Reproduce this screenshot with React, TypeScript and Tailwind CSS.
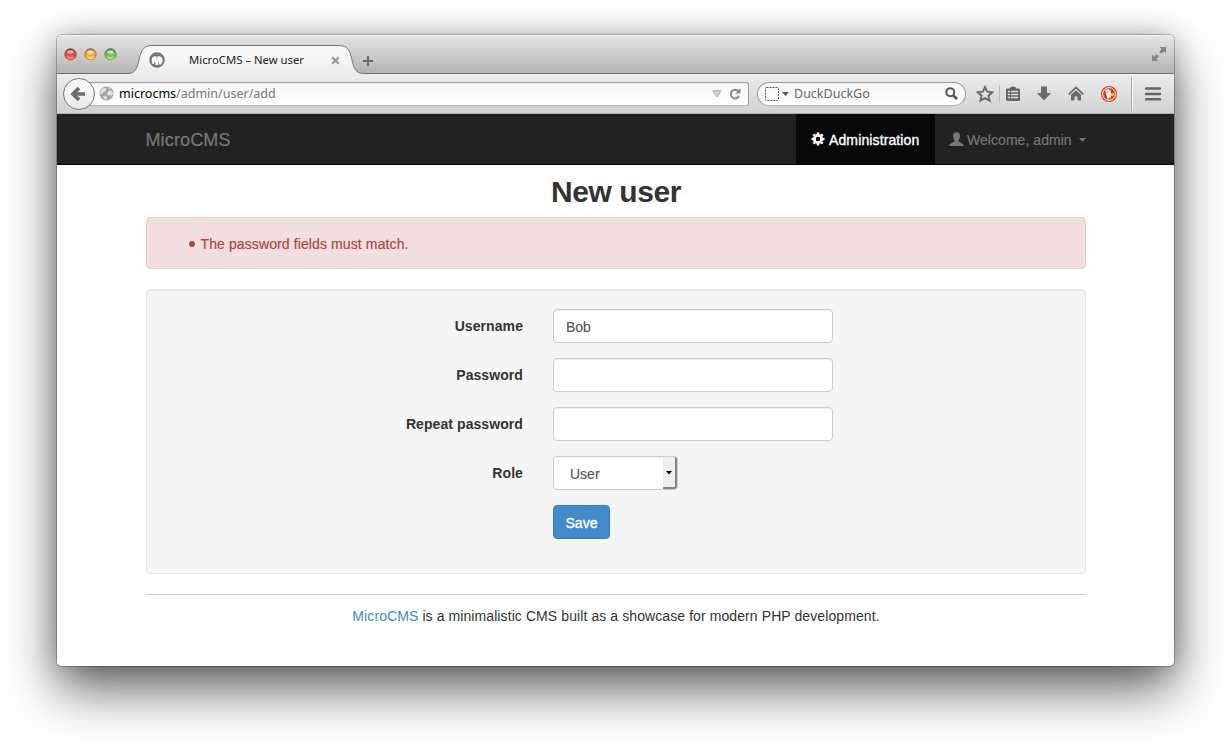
import type { ReactNode } from "react";

const chromeFont = "font-['Noto_Sans','Open_Sans',sans-serif]";

function Light({ tone }: { tone: "red" | "amber" | "green" }) {
  const tones = {
    red: ["#8c2622", "#ee4b48", "#ffb3ab"],
    amber: ["#96601c", "#f0ad3c", "#ffeeb0"],
    green: ["#47752f", "#7cbf55", "#d9f7b8"],
  };
  const [edge, mid, shine] = tones[tone];
  return (
    <svg className="size-[13px]" viewBox="0 0 13 13">
      <defs>
        <linearGradient id={"light-" + tone} x1="0" y1="0" x2="0" y2="1">
          <stop offset="0" stopColor={edge} />
          <stop offset=".3" stopColor={mid} />
          <stop offset=".6" stopColor={mid} />
          <stop offset="1" stopColor={shine} />
        </linearGradient>
      </defs>
      <circle cx="6.5" cy="7.1" r="5.9" fill="#fff" opacity=".6" />
      <circle cx="6.5" cy="6.4" r="5.6" fill={`url(#light-${tone})`} stroke={edge} strokeWidth=".9" />
      <ellipse cx="6.5" cy="3.9" rx="3" ry="1.700" fill="#fff" opacity=".65" />
    </svg>
  );
}

function TabBar() {
  return (
    <div className={`flex h-[39px] shrink-0 items-start border-b border-[#6f6f6f] bg-linear-to-b from-[#e6e6e6] to-[#b4b4b4] shadow-[inset_0_1px_0_#f4f4f4] ${chromeFont}`}>
      <div className="flex gap-[7px] pt-[13px] pl-[7px]">
        <Light tone="red" />
        <Light tone="amber" />
        <Light tone="green" />
      </div>
      <div className="relative ml-[11px] h-[39px] w-[236px]">
        <svg className="absolute top-0 left-0 h-[40px] w-[236px]" viewBox="0 0 236 40">
          <defs>
            <linearGradient id="tab-fill" x1="0" y1="0" x2="0" y2="1">
              <stop offset="0.25" stopColor="#f7f7f7" />
              <stop offset="1" stopColor="#ececec" />
            </linearGradient>
          </defs>
          <path d="M0 40V38.500C7 38.500 9 34 11 25C13 15 16 10.500 24 10.500H211C219 10.500 222 15 224 25C226 34 228 38.500 236 38.500V40Z" fill="url(#tab-fill)" />
          <path d="M0 38.500C7 38.500 9 34 11 25C13 15 16 10.500 24 10.500H211C219 10.500 222 15 224 25C226 34 228 38.500 236 38.500" fill="none" stroke="#777" />
        </svg>
        <div className="relative flex h-[39px] items-center pt-[11px] pl-[21px]">
          <svg className="size-4" viewBox="0 0 16 16">
            <circle cx="8" cy="8" r="7.700" fill="#757575" />
            <path d="M2.700 9.500C2.300 6.500 3.600 4.600 5.800 4.300C7 4.100 7.600 4.500 8.100 4.800C9.500 3.800 13.300 4 13.500 7.500V10.500L12.600 10.200L12.300 12.600H10V10H9.200V12.900H6.500V10.200L5.500 9.500L5.200 12H3.600Z" fill="#fff" />
            <path d="M8 5L8.200 7.600L7.300 8.300" fill="none" stroke="#999" strokeWidth=".6" />
          </svg>
          <span className="ml-[24px] w-[142px] text-[11.300px] leading-4 whitespace-nowrap text-[#222]">MicroCMS – New user</span>
          <svg className="size-[9px]" viewBox="0 0 9 9">
            <path d="M1.200 1.200L7.800 7.800M7.800 1.200L1.200 7.800" stroke="#999" strokeWidth="2.200" />
          </svg>
        </div>
      </div>
      <svg className="mt-[20px] -ml-[2px] size-[12px]" viewBox="0 0 12 12">
        <path d="M6 1V11M1 6H11" stroke="#666" strokeWidth="1.800" />
      </svg>
      <svg className="mt-[11px] mr-[7px] ml-auto size-[16px]" viewBox="0 0 16 16" fill="#858585">
        <path d="M8.500 1H15V7.500L12.800 5.300L10.300 7.800L8.200 5.700L10.700 3.200Z" />
        <path d="M7.500 15H1V8.500L3.200 10.700L5.700 8.200L7.800 10.300L5.300 12.800Z" />
      </svg>
    </div>
  );
}

function Toolbar() {
  return (
    <div className={`flex h-[40px] shrink-0 items-center border-b border-[#b0b0b0] bg-linear-to-b from-[#ececec] to-[#d2d2d2] ${chromeFont}`}>
      <div className="z-10 ml-[5.500px] flex size-[32px] items-center justify-center rounded-full border border-[#757575] bg-linear-to-b from-[#fdfdfd] to-[#e9e9e9]">
        <svg className="-ml-px size-[16px]" viewBox="0 0 16 16">
          <path d="M9 2L3 8L9 14M3.500 8H15" fill="none" stroke="#6c6c6c" strokeWidth="3.600" />
        </svg>
      </div>
      <div className="-ml-[7px] flex h-[24px] w-[661.500px] items-center rounded-r-[3px] border border-[#9a9a9a] border-b-[#b5b5b5] bg-linear-to-b from-[#f5f5f5] to-white pl-[10.500px]">
        <svg className="size-[15px]" viewBox="0 0 15 15">
          <circle cx="7.500" cy="7.500" r="7" fill="#a3a3a3" />
          <path d="M1.500 5.500L3.500 2.500L6 2L8 3L6.500 5L4.500 6L3 8.500L1.200 8ZM8.500 6L11 4L13 5.500L14 8L12.500 10L11 9L9.500 9.500L8 8.500ZM4 10L6.500 9.500L8 11L7.500 13.800L5 13ZM9 1.300L11.500 2.300L10 3.500Z" fill="#e2e2e2" />
        </svg>
        <span className="ml-[5px] text-[12.500px] leading-[18px] text-[#777]">
          <span className="text-black">microcms</span>/admin/user/add
        </span>
        <svg className="mr-[7px] ml-auto h-[8px] w-[10px]" viewBox="0 0 10 8">
          <path d="M.8 .8H9.200L5 7Z" fill="#d4d4d4" stroke="#aaa" />
        </svg>
        <svg className="mr-[7px] size-[12px]" viewBox="0 0 12 12">
          <path d="M9.300 3.200A4.300 4.300 0 1 0 10 8" fill="none" stroke="#888" strokeWidth="2" />
          <path d="M11.500 .3V5.600H6.200Z" fill="#888" />
        </svg>
      </div>
      <div className="ml-[8px] flex h-[24px] w-[209px] items-center rounded-full border border-[#999] border-b-[#b5b5b5] bg-linear-to-b from-[#f5f5f5] to-white pl-[7px]">
        <svg className="size-[14px]" viewBox="0 0 14 14">
          <rect x=".5" y=".5" width="13" height="13" rx="1" fill="none" stroke="#555" strokeDasharray="2 1" />
        </svg>
        <svg className="ml-[3px] h-[4px] w-[7px]" viewBox="0 0 7 4"><path d="M0 0H7L3.500 4Z" fill="#555" /></svg>
        <span className="ml-[5px] text-[12.500px] leading-[18px] text-[#666]">DuckDuckGo</span>
        <svg className="mr-[7px] ml-auto size-[13px]" viewBox="0 0 13 13" fill="none" stroke="#555">
          <circle cx="5.300" cy="5.300" r="4" strokeWidth="2" />
          <path d="M8.300 8.300L12 12" strokeWidth="2.600" />
        </svg>
      </div>
      <svg className="ml-[10px] size-[18px]" viewBox="0 0 18 18">
        <path d="M9 2L11.200 6.600L16.300 7.200L12.500 10.700L13.600 15.700L9 13.100L4.400 15.700L5.500 10.700L1.700 7.200L6.800 6.600Z" fill="none" stroke="#6a6a6a" strokeWidth="1.900" />
      </svg>
      <div className="ml-[5px] h-[18px] w-px bg-[#bbb]" />
      <svg className="ml-[6px] h-[16px] w-[14px]" viewBox="0 0 14 16">
        <path d="M1 2.500H4V1.500L7 .3L10 1.500V2.500H13L14 3.500V14L13 15H1L0 14V3.500Z" fill="#666" />
        <path d="M2 5.500H4M5 5.500H12M2 8.500H4M5 8.500H12M2 11.500H4M5 11.500H12" stroke="#dedede" strokeWidth="1.600" />
      </svg>
      <svg className="ml-[16px] h-[15px] w-[16px]" viewBox="0 0 16 15">
        <path d="M5 .5H11V7H15L8 14.500L1 7H5Z" fill="#6a6a6a" />
      </svg>
      <svg className="ml-[16px] h-[15px] w-[16px]" viewBox="0 0 16 15">
        <path d="M.8 8.300L8 1.500L15.200 8.300" fill="none" stroke="#6a6a6a" strokeWidth="1.700" />
        <path d="M3 8.800L8 4.300L13 8.800V14.500H9.500V10.500H6.500V14.500H3Z" fill="#6a6a6a" />
      </svg>
      <svg className="ml-[17px] size-[16px]" viewBox="0 0 16 16">
        <circle cx="8" cy="8" r="8" fill="#d93a1c" />
        <circle cx="8" cy="8" r="6.400" fill="none" stroke="#fff" strokeWidth="1" />
        <path d="M4.300 4.200L7.200 3L9.700 4.800L10.200 8L9.500 13.200L6.800 13.600L5.500 9Z" fill="#fff" />
        <path d="M8.500 7.600L13 7V8.700L12 10.200L9 10Z" fill="#f7c52d" />
        <path d="M7 11.800L10.500 11.300V13L8 13.600Z" fill="#54a83c" />
        <path d="M5.800 5.800H7V7H5.800ZM8.500 5.500H9.500V6.500H8.500Z" fill="#5f88b5" />
      </svg>
      <div className="ml-[14px] h-[34px] w-px bg-[#aaa] shadow-[1px_0_0_#f4f4f4]" />
      <svg className="ml-[13px] h-[14px] w-[16px]" viewBox="0 0 16 14">
        <path d="M1 1.500H15M1 6.900H15M1 12.300H15" stroke="#666" strokeWidth="2.500" strokeLinecap="round" />
      </svg>
    </div>
  );
}

function Navbar() {
  return (
    <nav className="flex h-[51px] shrink-0 items-stretch border-b border-[#080808] bg-[#222] pr-[74px] pl-[88.500px] text-[14px] text-[#777]">
      <a className="flex items-center pt-[2px] text-[18px] tracking-[0.130px] [-webkit-text-stroke:0.200px_#777]">MicroCMS</a>
      <a className="ml-auto flex w-[139px] items-center bg-[#080808] pl-[15px] text-white">
        <svg className="mr-[4px] size-[14px]" viewBox="0 0 14 14">
          <g stroke="#fff" strokeWidth="2.600">
            <path d="M7 .5V13.500M.5 7H13.500M2.400 2.400L11.600 11.600M11.600 2.400L2.400 11.600" />
          </g>
          <circle cx="7" cy="7" r="4.900" fill="#fff" />
          <circle cx="7" cy="7" r="2.200" fill="#080808" />
        </svg>
        <span className="pt-[2px] tracking-[0.120px] [-webkit-text-stroke:0.350px_white]">Administration</span>
      </a>
      <a className="flex w-[165px] items-center pl-[14px]">
        <svg className="mr-[3px] size-[15px]" viewBox="0 0 15 15">
          <path d="M7.500 .3C9.900 .3 11.200 1.900 11 4.300C10.900 6.300 9.900 7.600 9.500 8.200V9.600C11 10.600 14.500 11.400 14.700 14H.3C.5 11.400 4 10.600 5.500 9.600V8.200C5.100 7.600 4.100 6.300 4 4.300C3.800 1.900 5.100 .3 7.500 .3Z" fill="#777" />
        </svg>
        <span className="pt-[2px] tracking-[0.050px] [-webkit-text-stroke:0.200px_#777]">Welcome, admin</span>
        <svg className="mt-[2px] ml-[7px] h-[4px] w-[7px]" viewBox="0 0 7 4"><path d="M0 0H7L3.500 3.800Z" fill="#777" /></svg>
      </a>
    </nav>
  );
}

function Row({ label, children }: { label: string; children?: ReactNode }) {
  return (
    <div className="flex h-[34px] items-center">
      <label className="w-[376px] text-right font-bold tracking-[0.080px]">{label}</label>
      <div className="ml-[30px] flex">{children}</div>
    </div>
  );
}

const field = "h-[34px] w-[280px] rounded-[4px] border border-[#ccc] bg-white px-3 pt-[2px] text-[14px] text-[#555] shadow-[inset_0_1px_1px_rgba(0,0,0,0.075)] outline-none [-webkit-text-stroke:0.150px_#555]";

export default function App() {
  return (
    <div className="h-[745px] w-[1231px] overflow-hidden bg-white pt-[35px] pl-[57px]">
      <div className="flex h-[631px] w-[1117px] flex-col rounded-[5px] shadow-[0_0_0_1px_rgba(0,0,0,0.22),0_0_25px_rgba(0,0,0,0.22),0_24px_52px_rgba(0,0,0,0.6)]">
        <div className="flex h-full flex-col overflow-hidden rounded-[5px] bg-white font-['Liberation_Sans',Arial,sans-serif] text-[14px] leading-5 text-[#333]">
          <TabBar />
          <Toolbar />
          <Navbar />
          <main className="ml-[89px] w-[940px]">
            <h2 className="mt-[10px] text-center text-[30px] leading-[33px] font-bold tracking-[-0.450px]">New user</h2>
            <div className="mt-[9px] flex h-[52px] items-center gap-[6px] rounded-[4px] border border-[#ebccd1] bg-[#f2dede] pl-[41.500px] text-[#a94442]">
              <span className="mt-px size-[6px] rounded-full bg-[#a94442]" />
              <span className="pt-[2px] tracking-[0.110px] [-webkit-text-stroke:0.150px_#a94442]">The password fields must match.</span>
            </div>
            <form className="mt-[20px] flex h-[285px] flex-col gap-[15px] rounded-[4px] border border-[#e3e3e3] bg-[#f5f5f5] pt-[19px] shadow-[inset_0_1px_1px_rgba(0,0,0,0.05)]">
              <Row label="Username"><input className={field} defaultValue="Bob" /></Row>
              <Row label="Password"><input type="password" className={field} /></Row>
              <Row label="Repeat password"><input type="password" className={field} /></Row>
              <Row label="Role">
                <div className="flex h-[34px] w-[125px] items-stretch justify-between rounded-[4px] border border-[#ccc] bg-white pl-[16px] text-[#555] shadow-[inset_0_1px_1px_rgba(0,0,0,0.075)]">
                  <span className="pt-[7px] [-webkit-text-stroke:0.150px_#555]">User</span>
                  <span className="flex w-[14px] items-center justify-center rounded-r-[3px] border-r-2 border-b-2 border-[#858585] bg-[#efefef]">
                    <svg className="mt-px h-[4px] w-[6px]" viewBox="0 0 6 4"><path d="M0 0H6L3 3.500Z" fill="#000" /></svg>
                  </span>
                </div>
              </Row>
              <Row label="">
                <button type="button" className="h-[34px] w-[57px] rounded-[4px] border border-[#357ebd] bg-[#428bca] pt-[2px] text-white [-webkit-text-stroke:0.350px_white]">Save</button>
              </Row>
            </form>
            <footer className="mt-[20px] border-t border-[#ccc] pt-[11px] text-center tracking-[0.090px]">
              <a className="text-[#428bca]">MicroCMS</a> is a minimalistic CMS built as a showcase for modern PHP development.
            </footer>
          </main>
        </div>
      </div>
    </div>
  );
}
